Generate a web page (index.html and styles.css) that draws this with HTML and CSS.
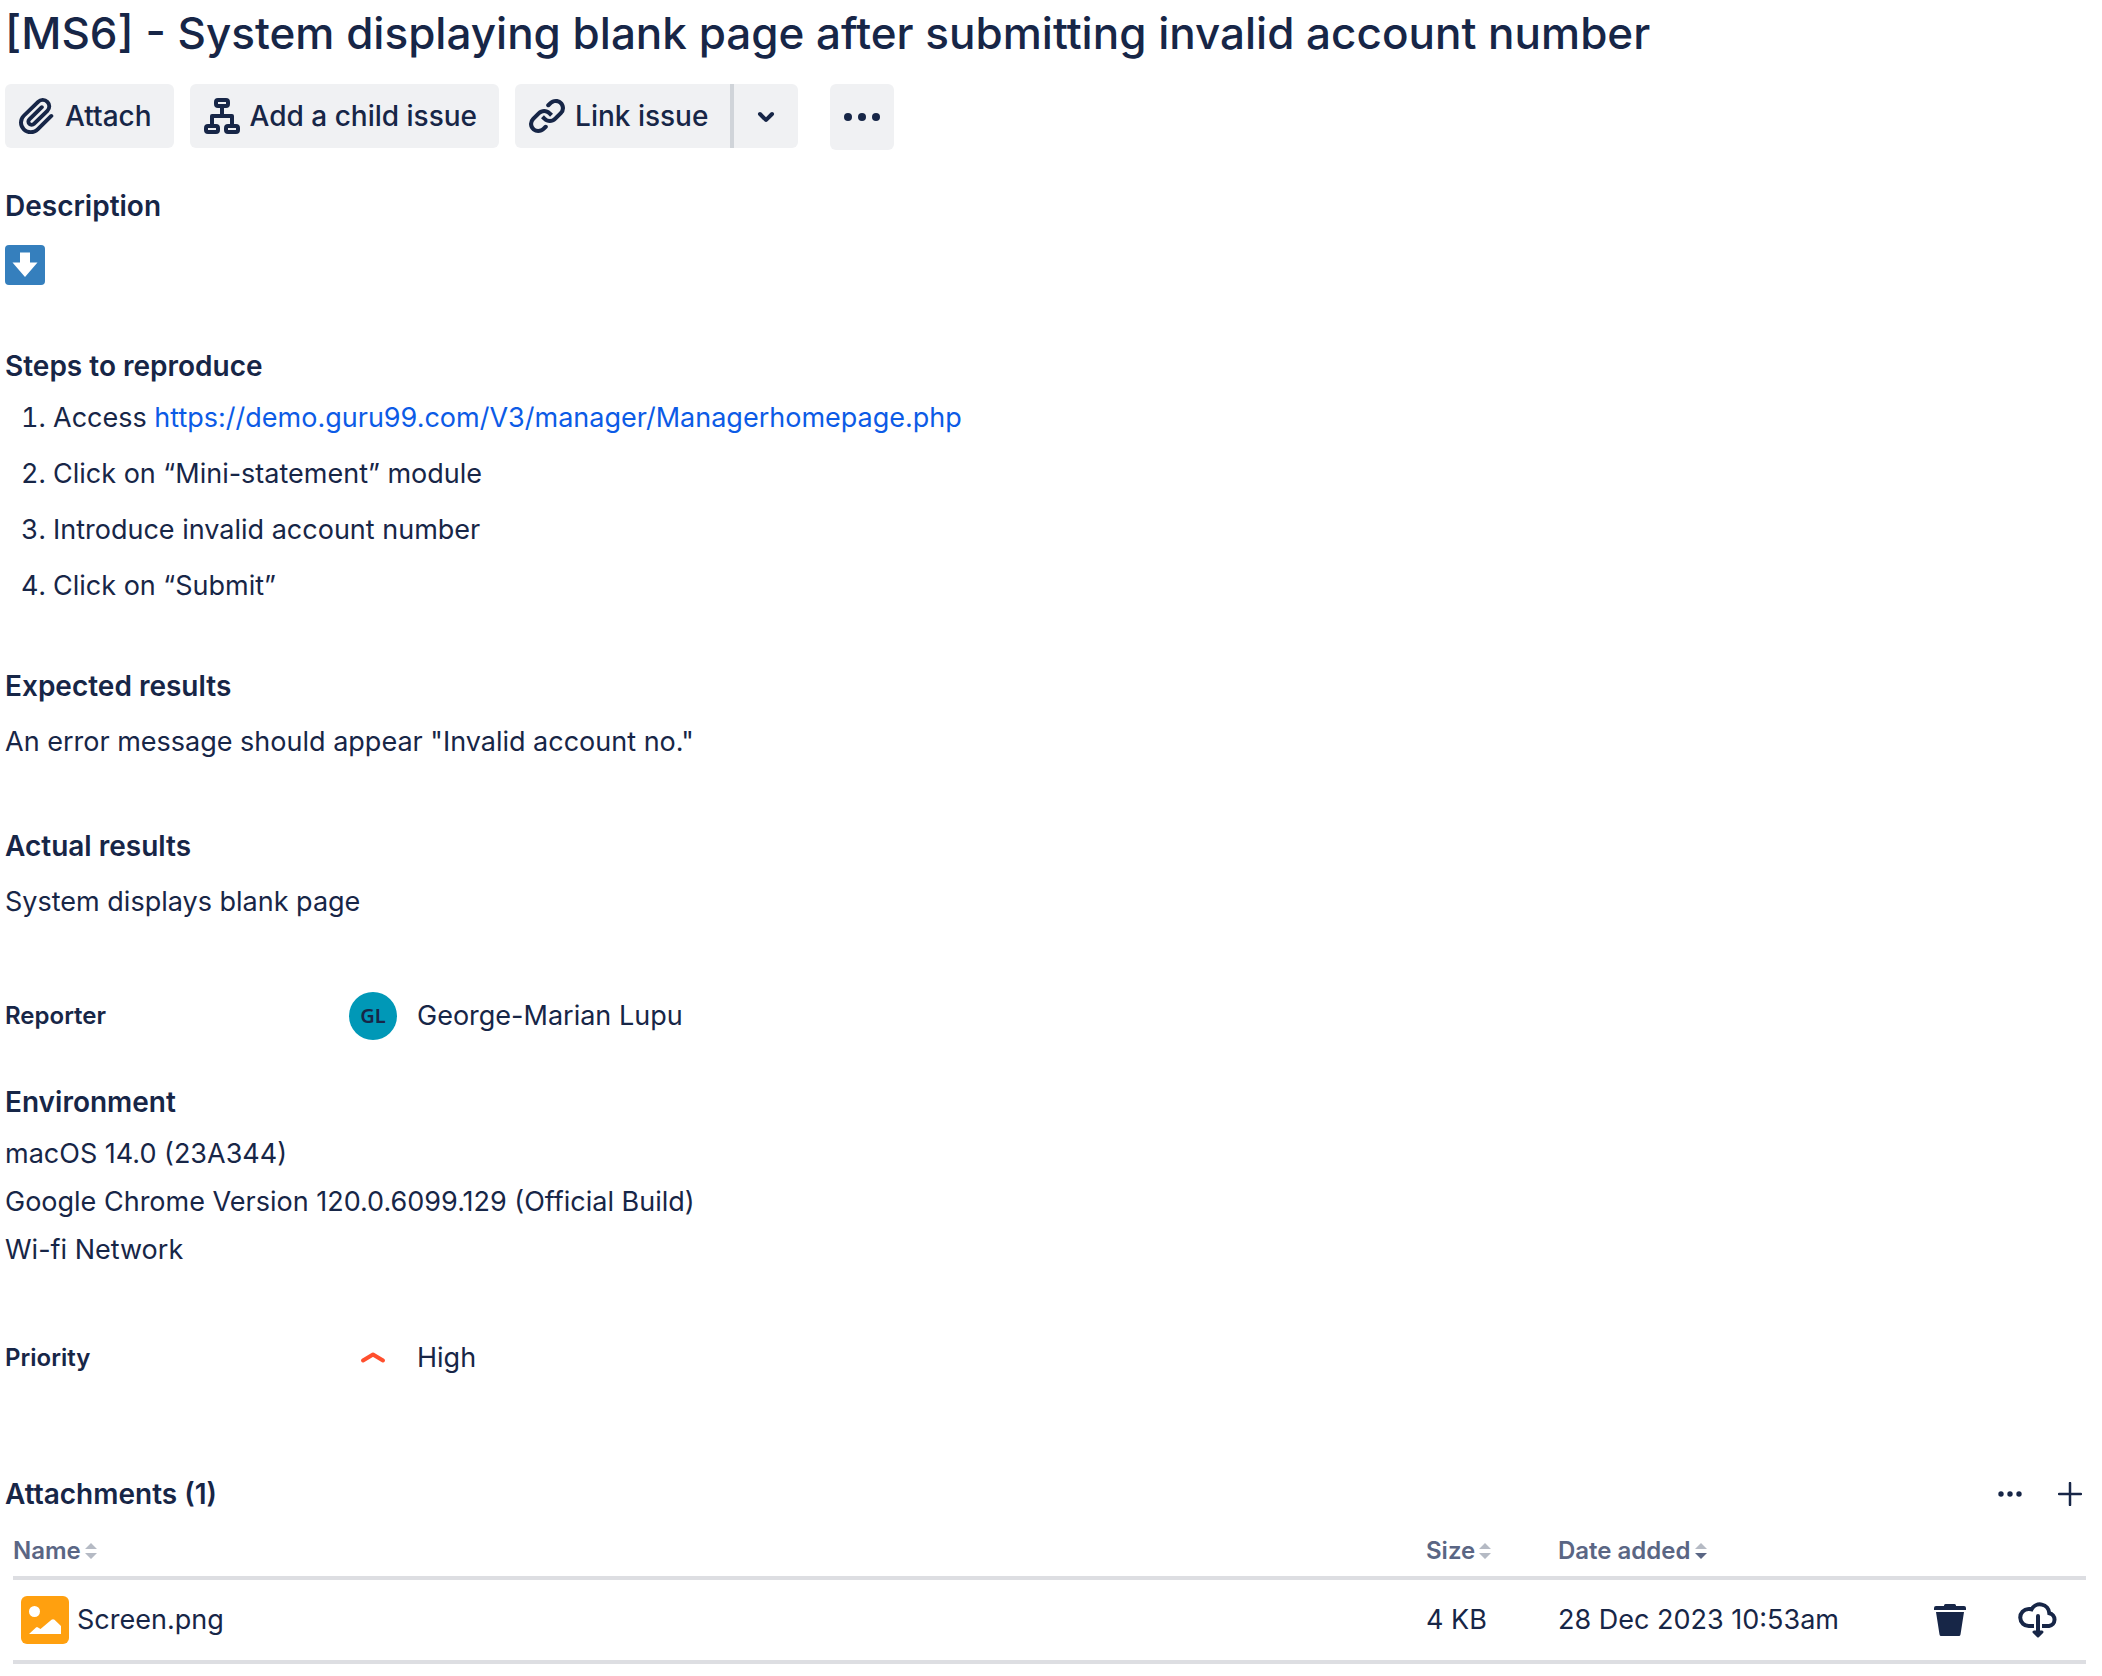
FILE: index.html
```html
<!DOCTYPE html>
<html lang="en">
<head>
<meta charset="utf-8">
<meta name="viewport" content="width=device-width, initial-scale=1">
<title>[MS6] - System displaying blank page after submitting invalid account number</title>
<link rel="stylesheet" href="styles.css">
</head>
<body>
<main class="issue">
  <h1 class="issue-title">[MS6] - System displaying blank page after submitting invalid account number</h1>

  <div class="toolbar">
    <button type="button" class="btn">
      <svg class="icon" viewBox="3 3 18 18" aria-hidden="true"><path fill="currentColor" d="M11.643 17.965c-1.53 1.495-4.016 1.496-5.542.004a3.773 3.773 0 01.002-5.412l7.147-6.985a2.316 2.316 0 013.233-.003c.893.873.895 2.282.004 3.153l-6.703 6.55a.653.653 0 01-.914-.008.62.62 0 010-.902l6.229-6.087a.941.941 0 000-1.353.995.995 0 00-1.384 0l-6.23 6.087a2.502 2.502 0 000 3.607 2.643 2.643 0 003.683.009l6.703-6.55a4.074 4.074 0 00-.003-5.859 4.306 4.306 0 00-6.002.003l-7.148 6.985a5.655 5.655 0 00-.001 8.118c2.29 2.237 6.015 2.238 8.308-.004l6.82-6.665a.935.935 0 000-1.353.994.994 0 00-1.384 0l-6.819 6.665z"/></svg>
      <span>Attach</span>
    </button>
    <button type="button" class="btn">
      <svg class="icon" viewBox="0 0 36 36" fill="none" stroke="currentColor" stroke-width="4" aria-hidden="true"><rect x="12" y="2" width="12" height="6" rx="2"/><rect x="2" y="28" width="12" height="6" rx="2"/><rect x="22" y="28" width="12" height="6" rx="2"/><path d="M18 8v10M8 28V18h20v10" stroke-linejoin="round"/></svg>
      <span>Add a child issue</span>
    </button>
    <div class="split">
      <button type="button" class="btn">
        <svg class="icon" viewBox="3 3.500 18 18" fill="currentColor" aria-hidden="true"><path d="M12.856 5.457l-.937.92a1.002 1.002 0 000 1.437 1.047 1.047 0 001.463 0l.984-.966c.967-.95 2.542-1.135 3.602-.288a2.54 2.54 0 01.203 3.81l-2.903 2.852a2.646 2.646 0 01-3.696 0l-1.11-1.09L9 13.57l1.108 1.089c1.822 1.788 4.802 1.788 6.622 0l2.905-2.852a4.558 4.558 0 00-.357-6.82c-1.893-1.517-4.695-1.226-6.422.47"/><path d="M11.144 19.543l.937-.92a1.002 1.002 0 000-1.437 1.047 1.047 0 00-1.462 0l-.985.966c-.967.95-2.542 1.135-3.602.288a2.54 2.54 0 01-.203-3.81l2.903-2.852a2.646 2.646 0 013.696 0l1.11 1.09L15 11.43l-1.108-1.089c-1.822-1.788-4.802-1.788-6.622 0l-2.905 2.852a4.558 4.558 0 00.357 6.82c1.893 1.517 4.695 1.226 6.422-.47"/></svg>
        <span>Link issue</span>
      </button>
      <button type="button" class="btn btn-square" aria-label="More link options">
        <svg class="icon" viewBox="3 3 18 18" fill="currentColor" aria-hidden="true"><path d="M8.292 10.293a1.009 1.009 0 000 1.419l2.939 2.965c.218.215.5.322.779.322s.556-.107.769-.322l2.93-2.955a1.01 1.01 0 000-1.419.987.987 0 00-1.406 0l-2.298 2.317-2.307-2.327a.99.99 0 00-1.406 0z"/></svg>
      </button>
    </div>
    <button type="button" class="btn btn-square btn-more" aria-label="More actions">
      <svg class="icon" viewBox="0 0 36 36" fill="currentColor" aria-hidden="true"><circle cx="4" cy="18" r="4"/><circle cx="18" cy="18" r="4"/><circle cx="32" cy="18" r="4"/></svg>
    </button>
  </div>

  <section class="block description">
    <h2 class="heading">Description</h2>
    <svg class="emoji" viewBox="0 0 40 40" role="img" aria-label="Down arrow"><rect width="40" height="40" rx="4" fill="#357fbd"/><path fill="#fff" d="M15 7.500h10v10h7.500L20 32 7.500 17.500H15z"/></svg>
  </section>

  <section class="block">
    <h2 class="heading">Steps to reproduce</h2>
    <ol class="steps">
      <li>Access <a href="https://demo.guru99.com/V3/manager/Managerhomepage.php">https://demo.guru99.com/V3/manager/Managerhomepage.php</a></li>
      <li>Click on “Mini-statement” module</li>
      <li>Introduce invalid account number</li>
      <li>Click on “Submit”</li>
    </ol>
  </section>

  <section class="block expected">
    <h2 class="heading">Expected results</h2>
    <p class="text">An error message should appear "Invalid account no."</p>
  </section>

  <section class="block actual">
    <h2 class="heading">Actual results</h2>
    <p class="text">System displays blank page</p>
  </section>

  <dl class="field reporter">
    <dt>Reporter</dt>
    <dd><span class="avatar" aria-hidden="true">GL</span>George-Marian Lupu</dd>
  </dl>

  <section class="block">
    <h2 class="heading">Environment</h2>
    <p class="text">macOS 14.0 (23A344)<br>Google Chrome Version 120.0.6099.129 (Official Build)<br>Wi-fi Network</p>
  </section>

  <dl class="field priority">
    <dt>Priority</dt>
    <dd><svg class="priority-icon" viewBox="0 0 48 48" aria-hidden="true"><path d="M14 26.500L24 20.500l10 6" fill="none" stroke="#ff4f2e" stroke-width="4" stroke-linecap="round" stroke-linejoin="round"/></svg>High</dd>
  </dl>

  <section class="attachments">
    <div class="attachments-bar">
      <h2 class="heading">Attachments (1)</h2>
      <div class="attachments-actions">
        <button type="button" class="icon-btn" aria-label="Attachment options"><svg viewBox="0 0 24 24" fill="currentColor" aria-hidden="true"><circle cx="3" cy="12" r="2.700"/><circle cx="12" cy="12" r="2.700"/><circle cx="21" cy="12" r="2.700"/></svg></button>
        <button type="button" class="icon-btn" aria-label="Add attachment"><svg viewBox="0 0 24 24" fill="none" stroke="currentColor" stroke-width="2.500" stroke-linecap="round" aria-hidden="true"><path d="M12 1v22M1 12h22"/></svg></button>
      </div>
    </div>
    <table class="files">
      <colgroup><col><col class="col-size"><col class="col-date"><col class="col-delete"><col class="col-download"></colgroup>
      <thead>
        <tr>
          <th scope="col"><button type="button" class="sort">Name<svg viewBox="0 0 12 16" aria-hidden="true"><path class="off" d="M6 0l6 6H0zM0 10h12l-6 6z"/></svg></button></th>
          <th scope="col"><button type="button" class="sort">Size<svg viewBox="0 0 12 16" aria-hidden="true"><path class="off" d="M6 0l6 6H0zM0 10h12l-6 6z"/></svg></button></th>
          <th scope="col" aria-sort="descending"><button type="button" class="sort">Date added<svg viewBox="0 0 12 16" aria-hidden="true"><path class="off" d="M6 0l6 6H0z"/><path class="on" d="M0 10h12l-6 6z"/></svg></button></th>
          <td></td>
          <td></td>
        </tr>
      </thead>
      <tbody>
        <tr>
          <td><span class="file"><svg class="file-icon" viewBox="0 0 48 48" aria-hidden="true"><rect width="48" height="48" rx="6" fill="#ffa00f"/><circle cx="13.500" cy="15.500" r="5.500" fill="#fff"/><path fill="#fff" d="M8 38l7-6.500q1-.8 2 0l2.500 1.500L30.500 23.700q1.500-1 3 0L40 30v8z"/></svg>Screen.png</span></td>
          <td>4 KB</td>
          <td>28 Dec 2023 10:53am</td>
          <td class="action"><button type="button" class="icon-btn" aria-label="Delete"><svg class="trash" viewBox="0 0 32 32" fill="currentColor" aria-hidden="true"><path d="M10 2V1.500Q10 0 11.500 0h9Q22 0 22 1.500V2h8q2 0 2 2v2H0V4q0-2 2-2zM2 8h28l-3.500 22.500Q26.200 32 25 32H7q-1.200 0-1.500-1.500z"/></svg></button></td>
          <td class="action"><button type="button" class="icon-btn" aria-label="Download"><svg class="cloud" viewBox="0 0 40 36" fill="none" stroke="currentColor" stroke-width="4" aria-hidden="true"><path d="M16 24H11A8.500 8.500 0 0 1 10.500 7Q12 6.900 13.500 7.300A9.500 9.500 0 0 1 31.300 11.200A6.500 6.500 0 0 1 31 24H24"/><path d="M20 14v16" stroke-linecap="round"/><path d="M16 30h8l-4 4z" fill="currentColor" stroke-width="3" stroke-linejoin="round"/></svg></button></td>
        </tr>
      </tbody>
    </table>
  </section>
</main>
</body>
</html>
```

FILE: styles.css
```css
* {
  box-sizing: border-box;
}

body {
  margin: 0;
  background: #fff;
  color: #172647;
  font-family: Inter, "Liberation Sans", sans-serif;
  font-size: 27px;
  line-height: 48px;
}

h1, h2, p, ol, dl, dd {
  margin: 0;
}

button {
  margin: 0;
  padding: 0;
  border: 0;
  background: none;
  color: inherit;
  font: inherit;
  cursor: pointer;
}

svg {
  display: block;
  flex: none;
}

a {
  color: #0c5be6;
  text-decoration: none;
}

.issue {
  padding: 5px 5px 12px;
}

.issue-title {
  font-size: 44px;
  font-weight: 500;
  line-height: 56px;
}

.toolbar {
  display: flex;
  gap: 16px;
  margin-top: 23px;
}

.btn {
  display: flex;
  align-items: center;
  gap: 10px;
  height: 64px;
  padding: 0 22px 0 14px;
  border-radius: 6px;
  background: #f0f1f3;
  font-size: 28px;
  font-weight: 500;
}

.icon {
  width: 36px;
  height: 36px;
}

.btn-square {
  justify-content: center;
  width: 64px;
  padding: 0;
}

.btn-more {
  height: 66px;
  margin-left: 16px;
}

.split {
  display: flex;
}

.split .btn:first-child {
  border-right: 4px solid #d0d4d9;
  border-radius: 6px 0 0 6px;
}

.split .btn:last-child {
  border-radius: 0 6px 6px 0;
}

.block {
  display: grid;
  gap: 12px;
  margin-top: 46px;
}

.expected,
.actual {
  gap: 16px;
}

.expected {
  margin-top: 60px;
}

.actual {
  margin-top: 64px;
}

.heading {
  font-size: 28px;
  font-weight: 600;
  line-height: 32px;
}

.description {
  gap: 23px;
  margin-top: 40px;
  margin-bottom: 65px;
}

.description + .block {
  margin-top: 0;
}

.emoji {
  width: 40px;
  height: 40px;
}

.steps {
  display: grid;
  gap: 8px;
  padding-left: 48px;
}

.field {
  display: grid;
  grid-template-columns: 344px 1fr;
  align-items: center;
}

.field dt {
  font-size: 24px;
  font-weight: 600;
}

.field dd {
  display: flex;
  align-items: center;
  gap: 20px;
}

.reporter {
  margin-top: 66px;
}

.priority {
  margin-top: 60px;
}

.avatar {
  width: 48px;
  height: 48px;
  border-radius: 50%;
  background: #0098b7;
  font-family: "Noto Sans", sans-serif;
  font-size: 20px;
  font-weight: 600;
  text-align: center;
}

.priority-icon {
  width: 48px;
  height: 48px;
}

.attachments {
  margin-top: 96px;
}

.attachments-bar {
  display: flex;
  align-items: center;
  justify-content: space-between;
  height: 32px;
  padding-right: 15px;
}

.attachments-actions {
  display: flex;
  align-items: center;
  gap: 36px;
}

.attachments-actions svg {
  width: 24px;
  height: 24px;
}

.files {
  width: calc(100% - 19px);
  margin: 16px 11px 0 8px;
  border-collapse: collapse;
  table-layout: fixed;
}

.col-size {
  width: 132px;
}

.col-date {
  width: 352px;
}

.col-delete {
  width: 80px;
}

.col-download {
  width: 96px;
}

.files th,
.files td {
  padding: 0;
  text-align: left;
  white-space: nowrap;
}

.files tr {
  border-bottom: 4px solid #dddee2;
}

.files thead tr {
  height: 52px;
}

.files tbody tr {
  height: 84px;
}

.sort {
  display: flex;
  align-items: center;
  gap: 4px;
  color: #5a6684;
  font-size: 24px;
  font-weight: 600;
  line-height: 32px;
}

.sort svg {
  width: 12px;
  height: 16px;
}

.off {
  fill: #b5bac4;
}

.on {
  fill: #5a6684;
}

.file {
  display: flex;
  align-items: center;
  gap: 8px;
  padding-left: 8px;
}

.file-icon {
  width: 48px;
  height: 48px;
}

.action .icon-btn {
  display: block;
  margin: 0 auto;
}

.trash {
  width: 32px;
  height: 32px;
}

.cloud {
  width: 40px;
  height: 36px;
}
```
